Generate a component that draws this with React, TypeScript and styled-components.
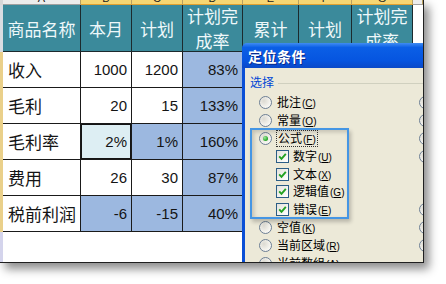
import { Fragment } from 'react';
import styled, { createGlobalStyle } from 'styled-components';

const GlobalStyle = createGlobalStyle`
  html, body {
    margin: 0;
    padding: 0;
    background: #ffffff;
  }
  body {
    width: 446px;
    height: 284px;
    overflow: hidden;
    font-family: "Liberation Sans", "Noto Sans CJK SC", sans-serif;
  }
`;

type Fill = 'white' | 'blue' | 'pale';

const fills: Record<Fill, string> = {
  white: '#ffffff',
  blue: '#9cb8e0',
  pale: '#ddeef3',
};

const COLS = [78, 51, 51, 60, 56, 53, 61];
const LETTERS = ['A', 'B', 'C', 'D', 'E', 'F', 'G'];

const heads = [['商品名称'], ['本月'], ['计划'], ['计划完', '成率'], ['累计'], ['计划'], ['计划完', '成率']];

const rows = [
  { name: '收入', month: '1000', plan: '1200', rate: '83%' },
  { name: '毛利', month: '20', plan: '15', rate: '133%' },
  { name: '毛利率', month: '2%', plan: '1%', rate: '160%', monthFill: 'pale' as Fill, planFill: 'blue' as Fill, selected: true },
  { name: '费用', month: '26', plan: '30', rate: '87%' },
  { name: '税前利润', month: '-6', plan: '-15', rate: '40%', monthFill: 'blue' as Fill, planFill: 'blue' as Fill },
];

type Entry = { label: string; hot: string; on?: boolean; check?: boolean; sub?: boolean };

const leftItems: Entry[] = [
  { label: '批注', hot: 'C' },
  { label: '常量', hot: 'O' },
  { label: '公式', hot: 'F', on: true },
  { label: '数字', hot: 'U', check: true },
  { label: '文本', hot: 'X', check: true },
  { label: '逻辑值', hot: 'G', check: true },
  { label: '错误', hot: 'E', check: true },
  { label: '空值', hot: 'K' },
  { label: '当前区域', hot: 'R' },
  { label: '当前数组', hot: 'A' },
  { label: '对象', hot: 'B' },
];

const rightItems: Entry[] = [
  { label: '行内容差异单元格', hot: 'W' },
  { label: '列内容差异单元格', hot: 'M' },
  { label: '引用单元格', hot: 'P' },
  { label: '从属单元格', hot: 'D' },
  { label: '直属', hot: 'I', sub: true },
  { label: '所有级别', hot: 'L', sub: true },
  { label: '最后一个单元格', hot: 'S' },
  { label: '可见单元格', hot: 'Y' },
  { label: '条件格式', hot: 'T' },
  { label: '全部', hot: 'L', sub: true },
  { label: '相同', hot: 'E', sub: true },
];

const Stage = styled.div`
  width: 446px;
  height: 284px;
`;

const Shot = styled.div`
  position: relative;
  width: 424px;
  height: 263px;
  box-sizing: border-box;
  border-right: 1px solid #202020;
  border-bottom: 1px solid #202020;
  overflow: hidden;
  display: flex;
  flex-direction: column;
  background: #ffffff;
  box-shadow: 5px 6px 9px rgba(0, 0, 0, 0.45);
`;

const ColStrip = styled.div`
  display: flex;
  height: 5px;
  flex-shrink: 0;
  background: #e6e6e6;
`;

const Corner = styled.div`
  width: 3px;
  background: #d8d8d8;
`;

const ColHead = styled.div<{ $active?: boolean }>`
  box-sizing: border-box;
  flex-shrink: 0;
  overflow: hidden;
  display: flex;
  justify-content: center;
  align-items: flex-end;
  border-right: 1px solid #b8a060;
  border-bottom: 1px solid ${p => (p.$active ? '#e0a030' : '#a0a0a0')};
  background: ${p => (p.$active ? '#f6d673' : '#ececec')};
`;

const Letter = styled.span`
  font-size: 11px;
  line-height: 11px;
  color: #222;
`;

const Main = styled.div`
  flex: 1;
  display: flex;
`;

const RowStrip = styled.div`
  width: 3px;
  flex-shrink: 0;
  display: grid;
  grid-template-rows: 47px 180px 1fr;
`;

const RowMark = styled.div<{ $tone: string }>`
  background: ${p => p.$tone};
`;

const Sheet = styled.div`
  flex: 1;
  display: grid;
  grid-template-columns: ${COLS.map(w => `${w}px`).join(' ')} 1fr;
  grid-template-rows: 47px repeat(5, 36px) 1fr;
`;

const HeadCell = styled.div`
  box-sizing: border-box;
  border-right: 1px solid #1c2a2e;
  border-bottom: 1px solid #1c2a2e;
  background: #3b8a9b;
  color: #eef8fa;
  font-family: "Noto Sans CJK SC", sans-serif;
  font-size: 17px;
  line-height: 25px;
  display: flex;
  flex-direction: column;
  align-items: center;
  justify-content: center;
  overflow: hidden;
`;

const Cell = styled.div<{ $fill?: Fill; $num?: boolean; $selected?: boolean }>`
  box-sizing: border-box;
  border-right: 1px solid #1a1a1a;
  border-bottom: 1px solid #1a1a1a;
  display: flex;
  align-items: center;
  justify-content: ${p => (p.$num ? 'flex-end' : 'flex-start')};
  padding: ${p => (p.$num ? '0 4px 0 0' : '0 0 0 5px')};
  background: ${p => fills[p.$fill ?? 'white']};
  box-shadow: ${p => (p.$selected ? 'inset 0 0 0 1px #151515' : 'none')};
  font-family: ${p => (p.$num ? '"Liberation Sans", sans-serif' : '"Noto Sans CJK SC", sans-serif')};
  font-size: ${p => (p.$num ? '15px' : '17px')};
  color: #141414;
`;

const Blank = styled.div<{ $span?: boolean }>`
  background: #ffffff;
  grid-column: ${p => (p.$span ? '1 / -1' : 'auto')};
`;

const Dialog = styled.div`
  position: absolute;
  left: 242px;
  top: 43px;
  width: 260px;
  height: 250px;
  display: flex;
  flex-direction: column;
  font-family: "Noto Sans CJK SC", sans-serif;
`;

const TitleBar = styled.div`
  height: 25px;
  flex-shrink: 0;
  display: flex;
  align-items: center;
  padding-left: 6px;
  border-radius: 5px 0 0 0;
  background: linear-gradient(to bottom, #3f8cf3 0%, #0b5fe6 18%, #0655e0 70%, #0a49c8 100%);
  color: #ffffff;
  font-size: 14px;
  font-weight: 700;
  letter-spacing: 0.5px;
  text-shadow: 1px 1px 0 #0a2a8a;
`;

const Body = styled.div`
  flex: 1;
  background: #ece9d8;
  border-left: 3px solid #0a4fd6;
  padding: 7px 0 0 5px;
`;

const GroupHead = styled.div`
  display: flex;
  align-items: center;
  height: 14px;
`;

const GroupLabel = styled.span`
  font-size: 12px;
  line-height: 14px;
  color: #0046d5;
`;

const GroupLine = styled.span`
  flex: 1;
  height: 1px;
  margin: 2px 0 0 4px;
  background: #d0d0bf;
`;

const Items = styled.div`
  margin-top: 5px;
  padding-left: 9px;
  display: grid;
  grid-template-columns: 160px 160px;
  grid-template-rows: repeat(11, 17.8px);
  grid-auto-flow: column;
`;

const Item = styled.div<{ $indent?: boolean }>`
  display: flex;
  align-items: center;
  gap: 4px;
  padding-left: ${p => (p.$indent ? '17px' : '0')};
  font-size: 12px;
  color: #000;
  white-space: nowrap;
`;

const Radio = styled.span<{ $on?: boolean }>`
  box-sizing: border-box;
  width: 13px;
  height: 13px;
  flex-shrink: 0;
  margin-right: 1px;
  border-radius: 50%;
  border: 1px solid #6d7f94;
  background: radial-gradient(circle at 35% 35%, #dcdad2 0%, #f4f3ee 60%, #ffffff 100%);
  display: flex;
  align-items: center;
  justify-content: center;
  &::after {
    content: '';
    display: ${p => (p.$on ? 'block' : 'none')};
    width: 5px;
    height: 5px;
    border-radius: 50%;
    background: radial-gradient(circle at 35% 35%, #9ee89e, #22a222 70%);
  }
`;

const Box = styled.span`
  box-sizing: border-box;
  width: 13px;
  height: 13px;
  flex-shrink: 0;
  border: 1px solid #2b5d86;
  background: linear-gradient(135deg, #e4e3dc, #ffffff);
  display: flex;
  align-items: center;
  justify-content: center;
`;

const Text = styled.span<{ $focus?: boolean }>`
  padding: ${p => (p.$focus ? '0 1px' : '0')};
  outline: ${p => (p.$focus ? '1px dotted #333' : 'none')};
  outline-offset: 0;
  line-height: 13px;
`;

const Hot = styled.span`
  margin-left: 1px;
  font-family: "Liberation Sans", sans-serif;
  font-size: 10px;
  u {
    text-underline-offset: 1px;
  }
`;

const Callout = styled.div`
  position: absolute;
  left: 8px;
  top: 85px;
  width: 99px;
  height: 91px;
  box-sizing: border-box;
  border: 2px solid #4596e4;
  box-shadow: inset 2px 2px 4px rgba(0, 0, 0, 0.18), 2px 3px 4px rgba(0, 0, 0, 0.22);
  pointer-events: none;
`;

const Check = () => (
  <svg width="9" height="9" viewBox="0 0 9 9">
    <path d="M1.2 4.4 L3.5 6.8 L7.8 1.8" fill="none" stroke="#21a121" strokeWidth="1.9" />
  </svg>
);

const Option = ({ label, hot, on, check, sub }: Entry) => (
  <Item $indent={check || sub}>
    {check ? (
      <Box>
        <Check />
      </Box>
    ) : (
      <Radio $on={on} />
    )}
    <Text $focus={on}>
      {label}
      <Hot>
        (<u>{hot}</u>)
      </Hot>
    </Text>
  </Item>
);

const App = () => {
  return (
    <>
      <GlobalStyle />
      <Stage>
        <Shot>
          <ColStrip>
            <Corner />
            {COLS.map((w, i) => (
              <ColHead key={i} $active={i > 0} style={{ width: w }}>
                <Letter>{LETTERS[i]}</Letter>
              </ColHead>
            ))}
            <ColHead style={{ flex: 1 }} />
          </ColStrip>
          <Main>
            <RowStrip>
              <RowMark $tone="#d9dde2" />
              <RowMark $tone="#ead08a" />
              <RowMark $tone="#d4d4ec" />
            </RowStrip>
            <Sheet>
              {heads.map((lines, i) => (
                <HeadCell key={i}>
                  {lines.map(l => (
                    <span key={l}>{l}</span>
                  ))}
                </HeadCell>
              ))}
              <Blank />
              {rows.map(r => (
                <Fragment key={r.name}>
                  <Cell>{r.name}</Cell>
                  <Cell $num $fill={r.monthFill} $selected={r.selected}>
                    {r.month}
                  </Cell>
                  <Cell $num $fill={r.planFill}>
                    {r.plan}
                  </Cell>
                  <Cell $num $fill="blue">
                    {r.rate}
                  </Cell>
                  <Cell $num />
                  <Cell $num />
                  <Cell $num $fill="blue" />
                  <Blank />
                </Fragment>
              ))}
              <Blank $span />
            </Sheet>
          </Main>
          <Dialog>
            <TitleBar>定位条件</TitleBar>
            <Body>
              <GroupHead>
                <GroupLabel>选择</GroupLabel>
                <GroupLine />
              </GroupHead>
              <Items>
                {leftItems.map((it, i) => (
                  <Option key={`l${i}`} {...it} />
                ))}
                {rightItems.map((it, i) => (
                  <Option key={`r${i}`} {...it} />
                ))}
              </Items>
            </Body>
            <Callout />
          </Dialog>
        </Shot>
      </Stage>
    </>
  );
};

export default App;
